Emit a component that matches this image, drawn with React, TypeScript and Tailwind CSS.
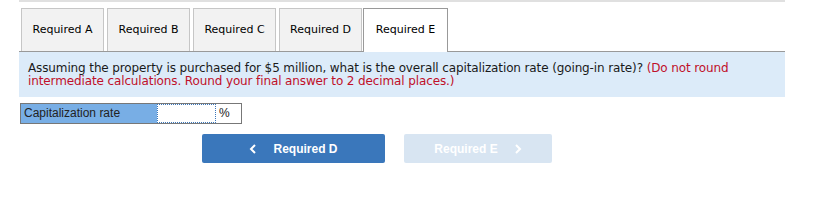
import React from "react";

const tabFont = { fontFamily: '"DejaVu Sans", Verdana, sans-serif' };

function Tab({ label, active }: { label: string; active?: boolean }) {
  return active ? (
    <div className="h-[44px] w-[85px] -mb-px flex items-center justify-center border border-b-0 border-[#999999] bg-white text-[11px] text-black">
      {label}
    </div>
  ) : (
    <div className="h-[43px] w-[83px] flex items-center justify-center border border-b-0 border-[#c6c6c6] bg-[#f2f2f2] text-[11px] text-black">
      {label}
    </div>
  );
}

export default function App() {
  return (
    <div className="w-[815px] h-[213px] bg-white">
      <div className="ml-[19px] w-[766px]">
        <div className="h-[2px] bg-[#e0e0e0]" />
        <div className="mt-[6px] flex items-end pl-[2px] border-b border-[#999999]" style={tabFont}>
          <div className="flex items-end gap-[3px]">
            <Tab label="Required A" />
            <Tab label="Required B" />
            <Tab label="Required C" />
            <Tab label="Required D" />
          </div>
          <div className="ml-px">
            <Tab label="Required E" active />
          </div>
        </div>
        <div
          className="bg-[#dcebf9] h-[45px] pl-[9px] pt-[10px] text-[12px] leading-[13px] tracking-[-0.12px] text-[#1a1a1a]"
          style={tabFont}
        >
          Assuming the property is purchased for $5 million, what is the overall capitalization rate (going-in rate)?{" "}
          <span className="text-[#c0102a]">
            (Do not round
            <br />
            intermediate calculations. Round your final answer to 2 decimal places.)
          </span>
        </div>
        <div className="mt-[6px] ml-px flex h-[21px] w-[222px] border border-[#777777]" style={{ fontFamily: '"Liberation Sans", Arial, sans-serif' }}>
          <div className="w-[136px] bg-[#78aee5] text-[12px] leading-[19px] pl-[3px] text-[#222]">Capitalization rate</div>
          <div className="w-[59px] border border-dotted border-[#3a77bb] bg-white" />
          <div className="flex-1 bg-white text-[12px] leading-[19px] pl-[3px] text-[#222]">%</div>
        </div>
        <div className="mt-[10px] flex gap-[19px] pl-[183px]" style={{ fontFamily: '"Liberation Sans", Arial, sans-serif' }}>
          <div className="w-[183px] h-[29px] bg-[#3a77bb] rounded-[2px] flex items-center justify-center gap-[16px] text-white text-[12px] font-bold">
            <svg width="8" height="10" viewBox="0 0 8 10"><path d="M6 1 L2 5 L6 9" fill="none" stroke="white" strokeWidth="2" /></svg>
            <span>Required D</span>
          </div>
          <div className="w-[148px] h-[29px] bg-[#d8e5f2] rounded-[2px] flex items-center justify-center gap-[16px] text-white text-[12px] font-bold">
            <span>Required E</span>
            <svg width="8" height="10" viewBox="0 0 8 10"><path d="M2 1 L6 5 L2 9" fill="none" stroke="white" strokeWidth="2" /></svg>
          </div>
        </div>
      </div>
    </div>
  );
}
